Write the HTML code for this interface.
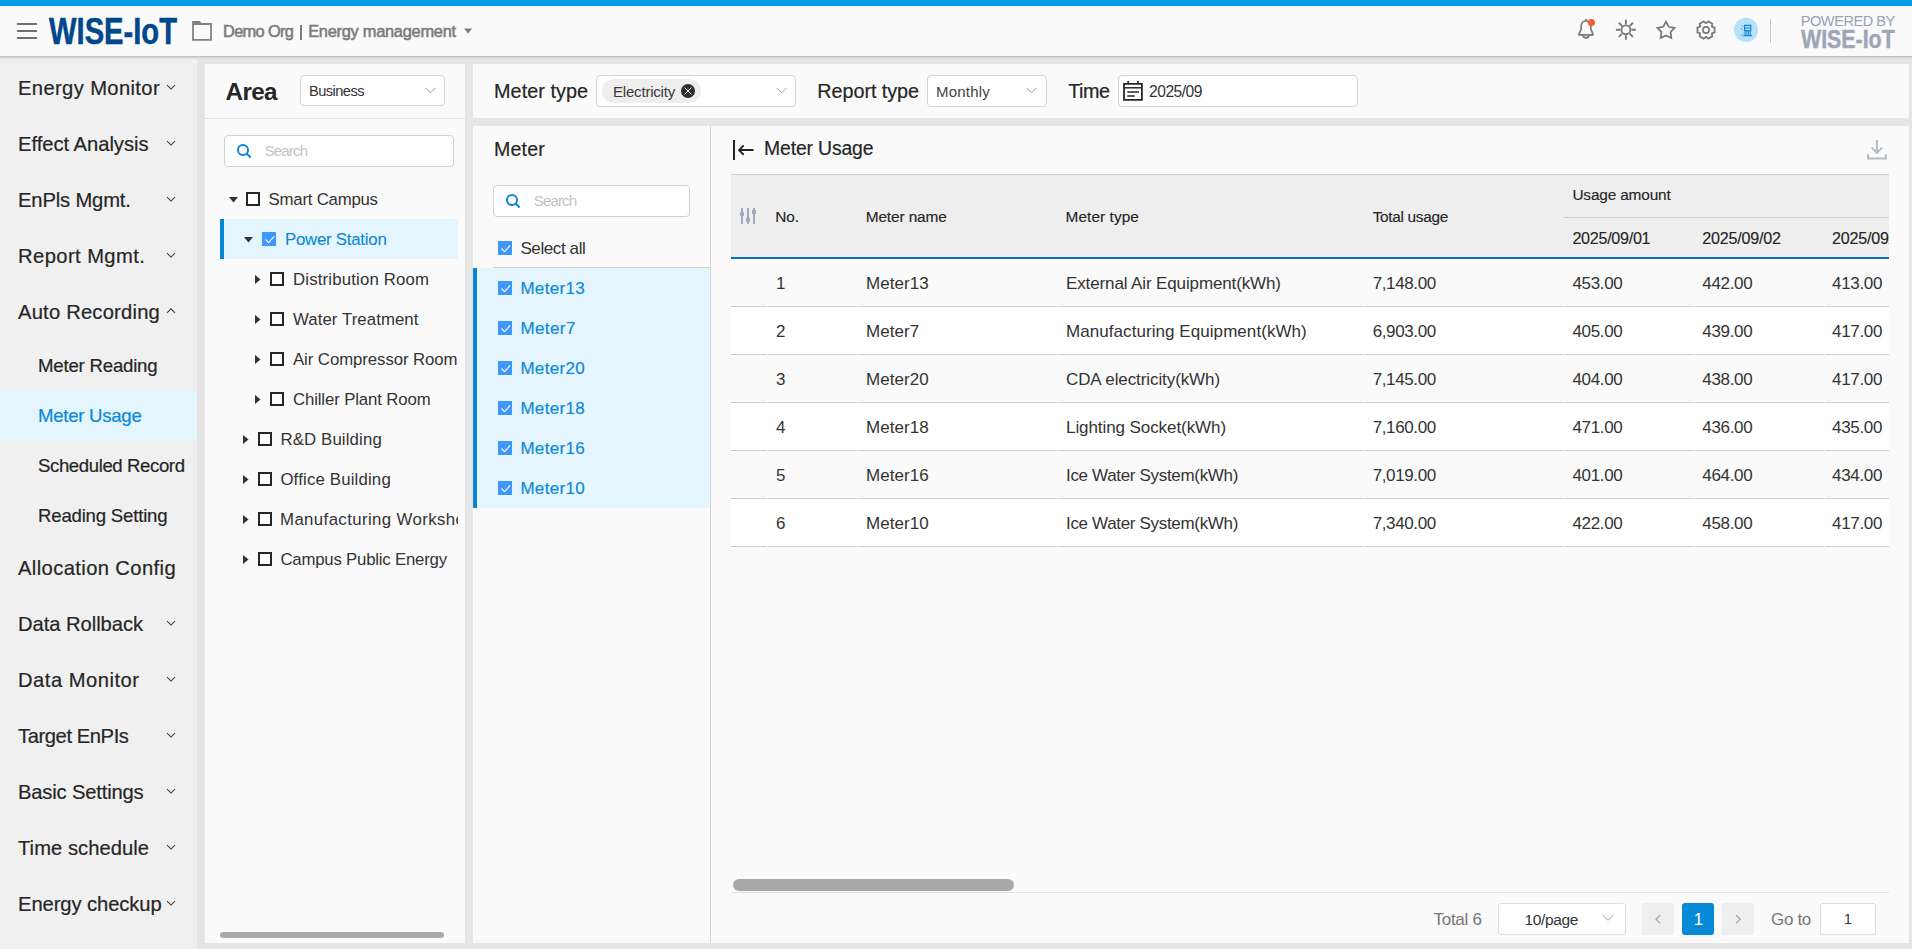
<!DOCTYPE html>
<html><head><meta charset="utf-8"><style>
html,body{margin:0;padding:0;width:1912px;height:949px;overflow:hidden;background:#e5e5e5}
body{position:relative;font-family:"Liberation Sans",sans-serif}
body div, body svg{position:absolute;white-space:nowrap}
body div div{position:absolute}
</style></head><body>
<div style="left:0px;top:0px;width:1912px;height:949px;background:#e5e5e5"></div>
<div style="left:0px;top:6px;width:1912px;height:50px;background:#fafafa"></div>
<div style="left:0px;top:56px;width:1912px;height:3px;background:linear-gradient(#b8b8b8,#d8d8d8 50%,#e5e5e5)"></div>
<div style="left:0px;top:0px;width:1912px;height:6px;background:#019fe9"></div>
<div style="left:49px;top:14.39px;font-size:36.4px;line-height:36.4px;color:#00478c;font-weight:700;transform:scaleX(0.8015);transform-origin:0 0;-webkit-text-stroke:0.5px #00478c;">WISE-IoT</div>
<div style="left:223px;top:23.12px;font-size:16.4px;line-height:16.4px;color:#7b7b7b;letter-spacing:-0.664px;-webkit-text-stroke:0.55px #7b7b7b;">Demo Org</div>
<div style="left:300.4px;top:24.6px;width:2px;height:15.2px;background:#7b7b7b"></div>
<div style="left:308.2px;top:23.12px;font-size:16.4px;line-height:16.4px;color:#7b7b7b;letter-spacing:-0.269px;-webkit-text-stroke:0.55px #7b7b7b;">Energy management</div>
<div style="left:1800.7px;top:13.94px;font-size:14.6px;line-height:14.6px;color:#98a2b4;letter-spacing:-0.474px;">POWERED BY</div>
<div style="left:1801px;top:27.13px;font-size:25.6px;line-height:25.6px;color:#9ca6b8;font-weight:700;transform:scaleX(0.8343);transform-origin:0 0;-webkit-text-stroke:0.45px #9ca6b8;">WISE-IoT</div>
<div style="left:0px;top:59px;width:197px;height:890px;background:#f0f0f0"></div>
<div style="left:18px;top:78.20px;font-size:20.2px;line-height:20.2px;color:#262626;letter-spacing:0.365px;-webkit-text-stroke:0.2px #262626;">Energy Monitor</div>
<div style="left:18px;top:134.20px;font-size:20.2px;line-height:20.2px;color:#262626;letter-spacing:-0.028px;-webkit-text-stroke:0.2px #262626;">Effect Analysis</div>
<div style="left:18px;top:190.20px;font-size:20.2px;line-height:20.2px;color:#262626;letter-spacing:-0.149px;-webkit-text-stroke:0.2px #262626;">EnPls Mgmt.</div>
<div style="left:18px;top:246.20px;font-size:20.2px;line-height:20.2px;color:#262626;letter-spacing:0.418px;-webkit-text-stroke:0.2px #262626;">Report Mgmt.</div>
<div style="left:18px;top:302.20px;font-size:20.2px;line-height:20.2px;color:#262626;letter-spacing:0.203px;-webkit-text-stroke:0.2px #262626;">Auto Recording</div>
<div style="left:18px;top:558.20px;font-size:20.2px;line-height:20.2px;color:#262626;letter-spacing:0.382px;-webkit-text-stroke:0.2px #262626;">Allocation Config</div>
<div style="left:18px;top:614.20px;font-size:20.2px;line-height:20.2px;color:#262626;letter-spacing:-0.052px;-webkit-text-stroke:0.2px #262626;">Data Rollback</div>
<div style="left:18px;top:670.20px;font-size:20.2px;line-height:20.2px;color:#262626;letter-spacing:0.493px;-webkit-text-stroke:0.2px #262626;">Data Monitor</div>
<div style="left:18px;top:726.20px;font-size:20.2px;line-height:20.2px;color:#262626;letter-spacing:-0.423px;-webkit-text-stroke:0.2px #262626;">Target EnPIs</div>
<div style="left:18px;top:782.20px;font-size:20.2px;line-height:20.2px;color:#262626;letter-spacing:-0.173px;-webkit-text-stroke:0.2px #262626;">Basic Settings</div>
<div style="left:18px;top:838.20px;font-size:20.2px;line-height:20.2px;color:#262626;letter-spacing:0.036px;-webkit-text-stroke:0.2px #262626;">Time schedule</div>
<div style="left:18px;top:894.20px;font-size:20.2px;line-height:20.2px;color:#262626;letter-spacing:-0.083px;-webkit-text-stroke:0.2px #262626;">Energy checkup</div>
<div style="left:0px;top:390px;width:196px;height:50px;background:#e4f5fd"></div>
<div style="left:38px;top:356.86px;font-size:18.6px;line-height:18.6px;color:#262626;letter-spacing:-0.198px;-webkit-text-stroke:0.2px #262626;">Meter Reading</div>
<div style="left:38px;top:406.86px;font-size:18.6px;line-height:18.6px;color:#0a8ad8;letter-spacing:-0.268px;-webkit-text-stroke:0.2px #0a8ad8;">Meter Usage</div>
<div style="left:38px;top:456.86px;font-size:18.6px;line-height:18.6px;color:#262626;letter-spacing:-0.399px;-webkit-text-stroke:0.2px #262626;">Scheduled Record</div>
<div style="left:38px;top:506.86px;font-size:18.6px;line-height:18.6px;color:#262626;letter-spacing:-0.195px;-webkit-text-stroke:0.2px #262626;">Reading Setting</div>
<div style="left:205px;top:64px;width:260px;height:879px;background:#fafafa"></div>
<div style="left:225.5px;top:80.41px;font-size:24.2px;line-height:24.2px;color:#262626;font-weight:700;letter-spacing:-0.574px;">Area</div>
<div style="left:300px;top:75px;width:145px;height:31px;background:#fff;border:1px solid #d4d4d4;border-radius:4px;box-sizing:border-box"></div>
<div style="left:309px;top:83.64px;font-size:14.6px;line-height:14.6px;color:#333;letter-spacing:-0.527px;">Business</div>
<svg style="left:425px;top:87px" width="11" height="7" viewBox="0 0 11 7"><path d="M0.5 0.8l5 5 5-5" fill="none" stroke="#999" stroke-width="1"/></svg>
<div style="left:205px;top:118px;width:260px;height:1px;background:#dde1ea"></div>
<div style="left:224px;top:135px;width:230px;height:32px;background:#fff;border:1px solid #d0d0d0;border-radius:4px;box-sizing:border-box"></div>
<div style="left:264.6px;top:142.93px;font-size:15.2px;line-height:15.2px;color:#c4c4c4;letter-spacing:-0.921px;">Search</div>
<div style="left:220px;top:219px;width:238px;height:40px;background:#e4f5fd"></div>
<div style="left:220px;top:219px;width:4px;height:40px;background:#0a84d6"></div>
<svg style="left:228.6px;top:197px" width="9" height="6" viewBox="0 0 9 6"><path d="M0 0h9L4.5 5.5z" fill="#333"/></svg>
<div style="left:246px;top:192px;width:14px;height:14px;border:2px solid #262626;box-sizing:border-box;background:#fff"></div>
<div style="left:268.6px;top:191.58px;font-size:16.8px;line-height:16.8px;color:#333;letter-spacing:-0.226px;">Smart Campus</div>
<svg style="left:244px;top:237px" width="9" height="6" viewBox="0 0 9 6"><path d="M0 0h9L4.5 5.5z" fill="#333"/></svg>
<svg style="left:262px;top:232px" width="14" height="14" viewBox="0 0 14 14"><rect width="14" height="14" fill="#4097fb"/><path d="M3.6 7.5L6.6 10.6 12.2 4.4" fill="none" stroke="#fff" stroke-width="1.1"/></svg>
<div style="left:285px;top:231.78px;font-size:16.8px;line-height:16.8px;color:#0a88d7;letter-spacing:-0.230px;-webkit-text-stroke:0.1px #0a88d7;">Power Station</div>
<svg style="left:255px;top:274.5px" width="6" height="9" viewBox="0 0 6 9"><path d="M0 0v9l5.5-4.5z" fill="#333"/></svg>
<div style="left:270px;top:272px;width:14px;height:14px;border:2px solid #262626;box-sizing:border-box;background:#fff"></div>
<div style="left:293px;top:271.78px;font-size:16.8px;line-height:16.8px;color:#333;letter-spacing:0.166px;">Distribution Room</div>
<svg style="left:255px;top:314.5px" width="6" height="9" viewBox="0 0 6 9"><path d="M0 0v9l5.5-4.5z" fill="#333"/></svg>
<div style="left:270px;top:312px;width:14px;height:14px;border:2px solid #262626;box-sizing:border-box;background:#fff"></div>
<div style="left:293px;top:311.78px;font-size:16.8px;line-height:16.8px;color:#333;letter-spacing:0.077px;">Water Treatment</div>
<svg style="left:255px;top:354.5px" width="6" height="9" viewBox="0 0 6 9"><path d="M0 0v9l5.5-4.5z" fill="#333"/></svg>
<div style="left:270px;top:352px;width:14px;height:14px;border:2px solid #262626;box-sizing:border-box;background:#fff"></div>
<div style="left:293px;top:351.78px;font-size:16.8px;line-height:16.8px;color:#333;letter-spacing:-0.079px;">Air Compressor Room</div>
<svg style="left:255px;top:394.5px" width="6" height="9" viewBox="0 0 6 9"><path d="M0 0v9l5.5-4.5z" fill="#333"/></svg>
<div style="left:270px;top:392px;width:14px;height:14px;border:2px solid #262626;box-sizing:border-box;background:#fff"></div>
<div style="left:293px;top:391.78px;font-size:16.8px;line-height:16.8px;color:#333;letter-spacing:-0.134px;">Chiller Plant Room</div>
<svg style="left:243px;top:434.5px" width="6" height="9" viewBox="0 0 6 9"><path d="M0 0v9l5.5-4.5z" fill="#333"/></svg>
<div style="left:258px;top:432px;width:14px;height:14px;border:2px solid #262626;box-sizing:border-box;background:#fff"></div>
<div style="left:280.4px;top:431.78px;font-size:16.8px;line-height:16.8px;color:#333;letter-spacing:0.141px;">R&amp;D Building</div>
<svg style="left:243px;top:474.5px" width="6" height="9" viewBox="0 0 6 9"><path d="M0 0v9l5.5-4.5z" fill="#333"/></svg>
<div style="left:258px;top:472px;width:14px;height:14px;border:2px solid #262626;box-sizing:border-box;background:#fff"></div>
<div style="left:280.4px;top:471.78px;font-size:16.8px;line-height:16.8px;color:#333;letter-spacing:0.173px;">Office Building</div>
<svg style="left:243px;top:514.5px" width="6" height="9" viewBox="0 0 6 9"><path d="M0 0v9l5.5-4.5z" fill="#333"/></svg>
<div style="left:258px;top:512px;width:14px;height:14px;border:2px solid #262626;box-sizing:border-box;background:#fff"></div>
<div style="left:280px;top:499px;width:178px;height:40px;overflow:hidden">
<div style="left:0px;top:12.78px;font-size:16.8px;line-height:16.8px;color:#333;letter-spacing:0.398px;">Manufacturing Workshop</div>
</div>
<svg style="left:243px;top:554.5px" width="6" height="9" viewBox="0 0 6 9"><path d="M0 0v9l5.5-4.5z" fill="#333"/></svg>
<div style="left:258px;top:552px;width:14px;height:14px;border:2px solid #262626;box-sizing:border-box;background:#fff"></div>
<div style="left:280.4px;top:551.78px;font-size:16.8px;line-height:16.8px;color:#333;letter-spacing:-0.210px;">Campus Public Energy</div>
<div style="left:220px;top:932px;width:224px;height:6px;background:#aaaaaa;border-radius:3px"></div>
<div style="left:473px;top:64px;width:1436px;height:54px;background:#fafafa"></div>
<div style="left:494px;top:82.04px;font-size:19.8px;line-height:19.8px;color:#262626;letter-spacing:0.075px;-webkit-text-stroke:0.2px #262626;">Meter type</div>
<div style="left:596px;top:75px;width:200px;height:32px;background:#fff;border:1px solid #d4d4d4;border-radius:4px;box-sizing:border-box"></div>
<div style="left:602px;top:79px;width:99px;height:24px;background:#eeeeee;border-radius:12px"></div>
<div style="left:613px;top:83.52px;font-size:15.1px;line-height:15.1px;color:#3a3a3a;letter-spacing:-0.234px;">Electricity</div>
<svg style="left:681px;top:84px" width="14" height="14" viewBox="0 0 14 14"><circle cx="7" cy="7" r="7" fill="#2e2e2e"/><path d="M3.6 3.6l6.8 6.8M10.4 3.6l-6.8 6.8" stroke="#fff" stroke-width="1"/></svg>
<svg style="left:776px;top:87px" width="11" height="7" viewBox="0 0 11 7"><path d="M0.5 0.8l5 5 5-5" fill="none" stroke="#999" stroke-width="1"/></svg>
<div style="left:817.3px;top:82.04px;font-size:19.8px;line-height:19.8px;color:#262626;letter-spacing:-0.051px;-webkit-text-stroke:0.2px #262626;">Report type</div>
<div style="left:927px;top:75px;width:120px;height:32px;background:#fff;border:1px solid #d4d4d4;border-radius:4px;box-sizing:border-box"></div>
<div style="left:936px;top:84.30px;font-size:15px;line-height:15px;color:#444;letter-spacing:0.210px;">Monthly</div>
<svg style="left:1026px;top:87px" width="11" height="7" viewBox="0 0 11 7"><path d="M0.5 0.8l5 5 5-5" fill="none" stroke="#999" stroke-width="1"/></svg>
<div style="left:1068.3px;top:82.04px;font-size:19.8px;line-height:19.8px;color:#262626;letter-spacing:-0.534px;-webkit-text-stroke:0.2px #262626;">Time</div>
<div style="left:1118px;top:75px;width:240px;height:32px;background:#fff;border:1px solid #d4d4d4;border-radius:4px;box-sizing:border-box"></div>
<div style="left:1149px;top:83.79px;font-size:15.6px;line-height:15.6px;color:#333;letter-spacing:-0.482px;">2025/09</div>
<div style="left:473px;top:126px;width:1436px;height:817px;background:#fafafa"></div>
<div style="left:710px;top:126px;width:1px;height:817px;background:#d4d4d4"></div>
<div style="left:494px;top:140.41px;font-size:19.6px;line-height:19.6px;color:#262626;letter-spacing:0.181px;-webkit-text-stroke:0.2px #262626;">Meter</div>
<div style="left:493px;top:185px;width:197px;height:32px;background:#fff;border:1px solid #d0d0d0;border-radius:4px;box-sizing:border-box"></div>
<div style="left:533.7px;top:192.93px;font-size:15.2px;line-height:15.2px;color:#c4c4c4;letter-spacing:-0.921px;">Search</div>
<svg style="left:498px;top:241px" width="14" height="14" viewBox="0 0 14 14"><rect width="14" height="14" fill="#4097fb"/><path d="M3.6 7.5L6.6 10.6 12.2 4.4" fill="none" stroke="#fff" stroke-width="1.1"/></svg>
<div style="left:520.4px;top:239.81px;font-size:17px;line-height:17px;color:#333;letter-spacing:-0.398px;">Select all</div>
<div style="left:493px;top:267px;width:217px;height:1px;background:#cfcfcf"></div>
<div style="left:473px;top:268px;width:237px;height:240px;background:#e4f5fd"></div>
<div style="left:473px;top:268px;width:4px;height:240px;background:#0a84d6"></div>
<svg style="left:498px;top:281px" width="14" height="14" viewBox="0 0 14 14"><rect width="14" height="14" fill="#4097fb"/><path d="M3.6 7.5L6.6 10.6 12.2 4.4" fill="none" stroke="#fff" stroke-width="1.1"/></svg>
<div style="left:520.4px;top:279.91px;font-size:17px;line-height:17px;color:#0a88d7;letter-spacing:0.318px;-webkit-text-stroke:0.15px #0a88d7;">Meter13</div>
<svg style="left:498px;top:321px" width="14" height="14" viewBox="0 0 14 14"><rect width="14" height="14" fill="#4097fb"/><path d="M3.6 7.5L6.6 10.6 12.2 4.4" fill="none" stroke="#fff" stroke-width="1.1"/></svg>
<div style="left:520.4px;top:319.91px;font-size:17px;line-height:17px;color:#0a88d7;letter-spacing:0.413px;-webkit-text-stroke:0.15px #0a88d7;">Meter7</div>
<svg style="left:498px;top:361px" width="14" height="14" viewBox="0 0 14 14"><rect width="14" height="14" fill="#4097fb"/><path d="M3.6 7.5L6.6 10.6 12.2 4.4" fill="none" stroke="#fff" stroke-width="1.1"/></svg>
<div style="left:520.4px;top:359.91px;font-size:17px;line-height:17px;color:#0a88d7;letter-spacing:0.318px;-webkit-text-stroke:0.15px #0a88d7;">Meter20</div>
<svg style="left:498px;top:401px" width="14" height="14" viewBox="0 0 14 14"><rect width="14" height="14" fill="#4097fb"/><path d="M3.6 7.5L6.6 10.6 12.2 4.4" fill="none" stroke="#fff" stroke-width="1.1"/></svg>
<div style="left:520.4px;top:399.91px;font-size:17px;line-height:17px;color:#0a88d7;letter-spacing:0.318px;-webkit-text-stroke:0.15px #0a88d7;">Meter18</div>
<svg style="left:498px;top:441px" width="14" height="14" viewBox="0 0 14 14"><rect width="14" height="14" fill="#4097fb"/><path d="M3.6 7.5L6.6 10.6 12.2 4.4" fill="none" stroke="#fff" stroke-width="1.1"/></svg>
<div style="left:520.4px;top:439.91px;font-size:17px;line-height:17px;color:#0a88d7;letter-spacing:0.318px;-webkit-text-stroke:0.15px #0a88d7;">Meter16</div>
<svg style="left:498px;top:481px" width="14" height="14" viewBox="0 0 14 14"><rect width="14" height="14" fill="#4097fb"/><path d="M3.6 7.5L6.6 10.6 12.2 4.4" fill="none" stroke="#fff" stroke-width="1.1"/></svg>
<div style="left:520.4px;top:479.91px;font-size:17px;line-height:17px;color:#0a88d7;letter-spacing:0.318px;-webkit-text-stroke:0.15px #0a88d7;">Meter10</div>
<div style="left:733px;top:140px;width:2px;height:20px;background:#262626"></div>
<div style="left:764px;top:138.98px;font-size:19.4px;line-height:19.4px;color:#262626;letter-spacing:-0.147px;-webkit-text-stroke:0.2px #262626;">Meter Usage</div>
<div style="left:731px;top:174px;width:1158px;height:1px;background:#cfcfcf"></div>
<div style="left:731px;top:175px;width:1158px;height:82px;background:#eeeeee"></div>
<div style="left:1564px;top:217px;width:325px;height:1px;background:#d0d0d0"></div>
<div style="left:731px;top:257px;width:1158px;height:2px;background:#0a70b8"></div>
<div style="left:775.3px;top:208.66px;font-size:15.4px;line-height:15.4px;color:#262626;letter-spacing:-0.084px;-webkit-text-stroke:0.15px #262626;">No.</div>
<div style="left:865.7px;top:208.66px;font-size:15.4px;line-height:15.4px;color:#262626;letter-spacing:-0.113px;-webkit-text-stroke:0.15px #262626;">Meter name</div>
<div style="left:1065.5px;top:208.66px;font-size:15.4px;line-height:15.4px;color:#262626;letter-spacing:0.078px;-webkit-text-stroke:0.15px #262626;">Meter type</div>
<div style="left:1372.7px;top:209.36px;font-size:15.4px;line-height:15.4px;color:#262626;letter-spacing:-0.311px;-webkit-text-stroke:0.15px #262626;">Total usage</div>
<div style="left:1572.4px;top:187.36px;font-size:15.4px;line-height:15.4px;color:#262626;letter-spacing:-0.159px;-webkit-text-stroke:0.15px #262626;">Usage amount</div>
<div style="left:1572.4px;top:229.67px;font-size:16.1px;line-height:16.1px;color:#262626;letter-spacing:-0.266px;-webkit-text-stroke:0.15px #262626;">2025/09/01</div>
<div style="left:1702.3px;top:229.67px;font-size:16.1px;line-height:16.1px;color:#262626;letter-spacing:-0.206px;-webkit-text-stroke:0.15px #262626;">2025/09/02</div>
<div style="left:1832px;top:225px;width:57px;height:25px;overflow:hidden">
<div style="left:0px;top:4.67px;font-size:16.1px;line-height:16.1px;color:#262626;letter-spacing:-0.206px;-webkit-text-stroke:0.15px #262626;">2025/09/03</div>
</div>
<div style="left:731px;top:306px;width:1158px;height:1px;background:#cccccc"></div>
<div style="left:767px;top:306px;width:1px;height:1px;background:#fafafa"></div>
<div style="left:857px;top:306px;width:1px;height:1px;background:#fafafa"></div>
<div style="left:1057px;top:306px;width:1px;height:1px;background:#fafafa"></div>
<div style="left:1364px;top:306px;width:1px;height:1px;background:#fafafa"></div>
<div style="left:1564px;top:306px;width:1px;height:1px;background:#fafafa"></div>
<div style="left:1694px;top:306px;width:1px;height:1px;background:#fafafa"></div>
<div style="left:1824px;top:306px;width:1px;height:1px;background:#fafafa"></div>
<div style="left:776px;top:275.01px;font-size:17px;line-height:17px;color:#333;">1</div>
<div style="left:866px;top:275.01px;font-size:17px;line-height:17px;color:#333;letter-spacing:0.045px;">Meter13</div>
<div style="left:1066px;top:275.01px;font-size:17px;line-height:17px;color:#333;letter-spacing:-0.124px;">External Air Equipment(kWh)</div>
<div style="left:1372.7px;top:275.01px;font-size:17px;line-height:17px;color:#333;letter-spacing:-0.372px;">7,148.00</div>
<div style="left:1572.4px;top:275.01px;font-size:17px;line-height:17px;color:#333;letter-spacing:-0.329px;">453.00</div>
<div style="left:1702.3px;top:275.01px;font-size:17px;line-height:17px;color:#333;letter-spacing:-0.329px;">442.00</div>
<div style="left:1832px;top:275.01px;font-size:17px;line-height:17px;color:#333;letter-spacing:-0.329px;">413.00</div>
<div style="left:731px;top:307px;width:1158px;height:47px;background:#ffffff"></div>
<div style="left:731px;top:354px;width:1158px;height:1px;background:#cccccc"></div>
<div style="left:767px;top:354px;width:1px;height:1px;background:#ffffff"></div>
<div style="left:857px;top:354px;width:1px;height:1px;background:#ffffff"></div>
<div style="left:1057px;top:354px;width:1px;height:1px;background:#ffffff"></div>
<div style="left:1364px;top:354px;width:1px;height:1px;background:#ffffff"></div>
<div style="left:1564px;top:354px;width:1px;height:1px;background:#ffffff"></div>
<div style="left:1694px;top:354px;width:1px;height:1px;background:#ffffff"></div>
<div style="left:1824px;top:354px;width:1px;height:1px;background:#ffffff"></div>
<div style="left:776px;top:323.01px;font-size:17px;line-height:17px;color:#333;">2</div>
<div style="left:866px;top:323.01px;font-size:17px;line-height:17px;color:#333;letter-spacing:0.044px;">Meter7</div>
<div style="left:1066px;top:323.01px;font-size:17px;line-height:17px;color:#333;letter-spacing:0.063px;">Manufacturing Equipment(kWh)</div>
<div style="left:1372.7px;top:323.01px;font-size:17px;line-height:17px;color:#333;letter-spacing:-0.372px;">6,903.00</div>
<div style="left:1572.4px;top:323.01px;font-size:17px;line-height:17px;color:#333;letter-spacing:-0.329px;">405.00</div>
<div style="left:1702.3px;top:323.01px;font-size:17px;line-height:17px;color:#333;letter-spacing:-0.329px;">439.00</div>
<div style="left:1832px;top:323.01px;font-size:17px;line-height:17px;color:#333;letter-spacing:-0.329px;">417.00</div>
<div style="left:731px;top:402px;width:1158px;height:1px;background:#cccccc"></div>
<div style="left:767px;top:402px;width:1px;height:1px;background:#fafafa"></div>
<div style="left:857px;top:402px;width:1px;height:1px;background:#fafafa"></div>
<div style="left:1057px;top:402px;width:1px;height:1px;background:#fafafa"></div>
<div style="left:1364px;top:402px;width:1px;height:1px;background:#fafafa"></div>
<div style="left:1564px;top:402px;width:1px;height:1px;background:#fafafa"></div>
<div style="left:1694px;top:402px;width:1px;height:1px;background:#fafafa"></div>
<div style="left:1824px;top:402px;width:1px;height:1px;background:#fafafa"></div>
<div style="left:776px;top:371.01px;font-size:17px;line-height:17px;color:#333;">3</div>
<div style="left:866px;top:371.01px;font-size:17px;line-height:17px;color:#333;letter-spacing:0.045px;">Meter20</div>
<div style="left:1066px;top:371.01px;font-size:17px;line-height:17px;color:#333;letter-spacing:-0.093px;">CDA electricity(kWh)</div>
<div style="left:1372.7px;top:371.01px;font-size:17px;line-height:17px;color:#333;letter-spacing:-0.372px;">7,145.00</div>
<div style="left:1572.4px;top:371.01px;font-size:17px;line-height:17px;color:#333;letter-spacing:-0.329px;">404.00</div>
<div style="left:1702.3px;top:371.01px;font-size:17px;line-height:17px;color:#333;letter-spacing:-0.329px;">438.00</div>
<div style="left:1832px;top:371.01px;font-size:17px;line-height:17px;color:#333;letter-spacing:-0.329px;">417.00</div>
<div style="left:731px;top:403px;width:1158px;height:47px;background:#ffffff"></div>
<div style="left:731px;top:450px;width:1158px;height:1px;background:#cccccc"></div>
<div style="left:767px;top:450px;width:1px;height:1px;background:#ffffff"></div>
<div style="left:857px;top:450px;width:1px;height:1px;background:#ffffff"></div>
<div style="left:1057px;top:450px;width:1px;height:1px;background:#ffffff"></div>
<div style="left:1364px;top:450px;width:1px;height:1px;background:#ffffff"></div>
<div style="left:1564px;top:450px;width:1px;height:1px;background:#ffffff"></div>
<div style="left:1694px;top:450px;width:1px;height:1px;background:#ffffff"></div>
<div style="left:1824px;top:450px;width:1px;height:1px;background:#ffffff"></div>
<div style="left:776px;top:419.01px;font-size:17px;line-height:17px;color:#333;">4</div>
<div style="left:866px;top:419.01px;font-size:17px;line-height:17px;color:#333;letter-spacing:0.045px;">Meter18</div>
<div style="left:1066px;top:419.01px;font-size:17px;line-height:17px;color:#333;letter-spacing:-0.079px;">Lighting Socket(kWh)</div>
<div style="left:1372.7px;top:419.01px;font-size:17px;line-height:17px;color:#333;letter-spacing:-0.372px;">7,160.00</div>
<div style="left:1572.4px;top:419.01px;font-size:17px;line-height:17px;color:#333;letter-spacing:-0.329px;">471.00</div>
<div style="left:1702.3px;top:419.01px;font-size:17px;line-height:17px;color:#333;letter-spacing:-0.329px;">436.00</div>
<div style="left:1832px;top:419.01px;font-size:17px;line-height:17px;color:#333;letter-spacing:-0.329px;">435.00</div>
<div style="left:731px;top:498px;width:1158px;height:1px;background:#cccccc"></div>
<div style="left:767px;top:498px;width:1px;height:1px;background:#fafafa"></div>
<div style="left:857px;top:498px;width:1px;height:1px;background:#fafafa"></div>
<div style="left:1057px;top:498px;width:1px;height:1px;background:#fafafa"></div>
<div style="left:1364px;top:498px;width:1px;height:1px;background:#fafafa"></div>
<div style="left:1564px;top:498px;width:1px;height:1px;background:#fafafa"></div>
<div style="left:1694px;top:498px;width:1px;height:1px;background:#fafafa"></div>
<div style="left:1824px;top:498px;width:1px;height:1px;background:#fafafa"></div>
<div style="left:776px;top:467.01px;font-size:17px;line-height:17px;color:#333;">5</div>
<div style="left:866px;top:467.01px;font-size:17px;line-height:17px;color:#333;letter-spacing:0.045px;">Meter16</div>
<div style="left:1066px;top:467.01px;font-size:17px;line-height:17px;color:#333;letter-spacing:-0.326px;">Ice Water System(kWh)</div>
<div style="left:1372.7px;top:467.01px;font-size:17px;line-height:17px;color:#333;letter-spacing:-0.372px;">7,019.00</div>
<div style="left:1572.4px;top:467.01px;font-size:17px;line-height:17px;color:#333;letter-spacing:-0.329px;">401.00</div>
<div style="left:1702.3px;top:467.01px;font-size:17px;line-height:17px;color:#333;letter-spacing:-0.329px;">464.00</div>
<div style="left:1832px;top:467.01px;font-size:17px;line-height:17px;color:#333;letter-spacing:-0.329px;">434.00</div>
<div style="left:731px;top:499px;width:1158px;height:47px;background:#ffffff"></div>
<div style="left:731px;top:546px;width:1158px;height:1px;background:#cccccc"></div>
<div style="left:767px;top:546px;width:1px;height:1px;background:#ffffff"></div>
<div style="left:857px;top:546px;width:1px;height:1px;background:#ffffff"></div>
<div style="left:1057px;top:546px;width:1px;height:1px;background:#ffffff"></div>
<div style="left:1364px;top:546px;width:1px;height:1px;background:#ffffff"></div>
<div style="left:1564px;top:546px;width:1px;height:1px;background:#ffffff"></div>
<div style="left:1694px;top:546px;width:1px;height:1px;background:#ffffff"></div>
<div style="left:1824px;top:546px;width:1px;height:1px;background:#ffffff"></div>
<div style="left:776px;top:515.01px;font-size:17px;line-height:17px;color:#333;">6</div>
<div style="left:866px;top:515.01px;font-size:17px;line-height:17px;color:#333;letter-spacing:0.045px;">Meter10</div>
<div style="left:1066px;top:515.01px;font-size:17px;line-height:17px;color:#333;letter-spacing:-0.326px;">Ice Water System(kWh)</div>
<div style="left:1372.7px;top:515.01px;font-size:17px;line-height:17px;color:#333;letter-spacing:-0.372px;">7,340.00</div>
<div style="left:1572.4px;top:515.01px;font-size:17px;line-height:17px;color:#333;letter-spacing:-0.329px;">422.00</div>
<div style="left:1702.3px;top:515.01px;font-size:17px;line-height:17px;color:#333;letter-spacing:-0.329px;">458.00</div>
<div style="left:1832px;top:515.01px;font-size:17px;line-height:17px;color:#333;letter-spacing:-0.329px;">417.00</div>
<div style="left:733px;top:879px;width:281px;height:12px;background:#a9a9a9;border-radius:6px"></div>
<div style="left:731px;top:892px;width:1158px;height:1px;background:#dde1ea"></div>
<div style="left:1433.5px;top:911.11px;font-size:17px;line-height:17px;color:#777;letter-spacing:-0.271px;">Total 6</div>
<div style="left:1498px;top:903px;width:128px;height:32px;background:#fff;border:1px solid #d9dce4;border-radius:3px;box-sizing:border-box"></div>
<div style="left:1524.5px;top:911.88px;font-size:15.5px;line-height:15.5px;color:#333;letter-spacing:-0.362px;">10/page</div>
<svg style="left:1602px;top:914px" width="12" height="7" viewBox="0 0 12 7"><path d="M0.5 0.8l5.5 5.5 5.5-5.5" fill="none" stroke="#999" stroke-width="1"/></svg>
<div style="left:1642px;top:903px;width:32px;height:32px;background:#eeeeee;border-radius:2px"></div>
<div style="left:1682px;top:903px;width:32px;height:32px;background:#0689d6;border-radius:3px"></div>
<div style="left:1693.8px;top:911.11px;font-size:17px;line-height:17px;color:#fff;">1</div>
<div style="left:1722px;top:903px;width:32px;height:32px;background:#eeeeee;border-radius:2px"></div>
<div style="left:1771px;top:911.11px;font-size:17px;line-height:17px;color:#777;letter-spacing:-0.319px;">Go to</div>
<div style="left:1820px;top:903px;width:56px;height:32px;background:#fff;border:1px solid #d9dce4;border-radius:3px;box-sizing:border-box"></div>
<div style="left:1844px;top:912.15px;font-size:14px;line-height:14px;color:#333;">1</div>
<svg style="left:0;top:0" width="1912" height="949"><path d="M17.8 24H36.2" stroke="#6e6e6e" stroke-width="2.1" stroke-linecap="round"/>
<path d="M17.8 31H36.2" stroke="#6e6e6e" stroke-width="2.1" stroke-linecap="round"/>
<path d="M17.8 38H36.2" stroke="#6e6e6e" stroke-width="2.1" stroke-linecap="round"/>
<path d="M192.1 21.1H199.7L201.5 23.1H211.9V40.8H192.1zM193.9 25V38.9H210.1V25z" fill="#808080" fill-rule="evenodd"/>
<path d="M464 28.6h8.2l-4.1 4.8z" fill="#7b7b7b"/>
<g fill="none" stroke="#7a7a7a" stroke-width="1.75" stroke-linejoin="round">
<path d="M1581.2 28.7V25.7a4.8 4.8 0 0 1 9.6 0V28.7L1593.1 34.75H1578.9L1581.2 28.7z"/>
<path d="M1583 34.75a3 3 0 0 0 6 0"/>
<path d="M1586 19v2"/></g>
<circle cx="1591.4" cy="22.5" r="3.6" fill="#f45b3a"/>
<circle cx="1625.9" cy="29.8" r="4.45" fill="none" stroke="#7a7a7a" stroke-width="1.8"/><path d="M1631.30 29.80L1635.90 29.80M1629.72 33.62L1632.97 36.87M1625.90 35.20L1625.90 39.80M1622.08 33.62L1618.83 36.87M1620.50 29.80L1615.90 29.80M1622.08 25.98L1618.83 22.73M1625.90 24.40L1625.90 19.80M1629.72 25.98L1632.97 22.73" stroke="#7a7a7a" stroke-width="1.9"/>
<polygon points="1666.00,21.70 1668.82,26.82 1674.56,27.92 1670.57,32.18 1671.29,37.98 1666.00,35.50 1660.71,37.98 1661.43,32.18 1657.44,27.92 1663.18,26.82" fill="none" stroke="#7a7a7a" stroke-width="1.8" stroke-linejoin="miter" stroke-miterlimit="3"/>
<polygon points="1712.06,26.69 1714.60,27.71 1714.60,32.29 1712.06,33.31 1711.89,33.59 1712.28,36.30 1708.32,38.59 1706.16,36.90 1705.84,36.90 1703.68,38.59 1699.72,36.30 1700.11,33.59 1699.94,33.31 1697.40,32.29 1697.40,27.71 1699.94,26.69 1700.11,26.41 1699.72,23.70 1703.68,21.41 1705.84,23.10 1706.16,23.10 1708.32,21.41 1712.28,23.70 1711.89,26.41" fill="none" stroke="#7a7a7a" stroke-width="1.8" stroke-linejoin="miter"/><circle cx="1706" cy="30" r="3.1" fill="none" stroke="#7a7a7a" stroke-width="1.7"/>
<circle cx="1746" cy="29.9" r="12.1" fill="#b5e2f6"/>
<g fill="none" stroke="#0d84d9">
<path d="M1744.6 25.4H1750.8V30.6H1744.6z" stroke-width="1.15"/>
<path d="M1744.6 28H1750.8" stroke-width="1.1"/>
<path d="M1745.1 30.6V35M1746.9 30.9V35M1748.6 30.9V35M1750.3 30.6V35" stroke-width="0.95"/>
<path d="M1743.4 35.6H1752.1" stroke-width="1.3"/>
<path d="M1741.6 25.1L1744.2 27.7M1741.2 28.4L1743.8 30.8M1741.2 35.8L1744 32.8" stroke-width="0.85" stroke-dasharray="1.1 0.7"/>
</g>
<path d="M1770.5 19v23.8" stroke="#c9c9c9" stroke-width="1"/>
<path d="M167 85.2L171 89.1L175 85.2" fill="none" stroke="#3a3a3a" stroke-width="1.05"/>
<path d="M167 141.2L171 145.1L175 141.2" fill="none" stroke="#3a3a3a" stroke-width="1.05"/>
<path d="M167 197.2L171 201.1L175 197.2" fill="none" stroke="#3a3a3a" stroke-width="1.05"/>
<path d="M167 253.2L171 257.1L175 253.2" fill="none" stroke="#3a3a3a" stroke-width="1.05"/>
<path d="M167 312.8L171 308.8L175 312.8" fill="none" stroke="#3a3a3a" stroke-width="1.05"/>
<path d="M167 621.2L171 625.1L175 621.2" fill="none" stroke="#3a3a3a" stroke-width="1.05"/>
<path d="M167 677.2L171 681.1L175 677.2" fill="none" stroke="#3a3a3a" stroke-width="1.05"/>
<path d="M167 733.2L171 737.1L175 733.2" fill="none" stroke="#3a3a3a" stroke-width="1.05"/>
<path d="M167 789.2L171 793.1L175 789.2" fill="none" stroke="#3a3a3a" stroke-width="1.05"/>
<path d="M167 845.2L171 849.1L175 845.2" fill="none" stroke="#3a3a3a" stroke-width="1.05"/>
<path d="M167 901.2L171 905.1L175 901.2" fill="none" stroke="#3a3a3a" stroke-width="1.05"/>
<circle cx="243" cy="150" r="5.05" fill="none" stroke="#0b84d3" stroke-width="1.95"/><path d="M246.6 153.6L250.6 157.6" stroke="#0b84d3" stroke-width="2.1"/>
<g fill="none" stroke="#262626"><path d="M1124 83.8H1141.9V99.9H1124z" stroke-width="1.8"/><path d="M1124 87.8H1141.9" stroke-width="1.5"/><path d="M1128.2 81V84M1137.9 81V84" stroke-width="1.7"/><path d="M1127.3 92H1139M1127.3 96H1134.8" stroke-width="1.7"/></g>
<circle cx="512" cy="200" r="5.05" fill="none" stroke="#0b84d3" stroke-width="1.95"/><path d="M515.6 203.6L519.6 207.6" stroke="#0b84d3" stroke-width="2.1"/>
<path d="M752.8 150H739.5M743.2 145.9L739 150.1 743.2 154.2" fill="none" stroke="#222" stroke-width="1.9" stroke-linecap="round" stroke-linejoin="round"/>
<path d="M1876.9 140V153M1871.7 147.6L1876.9 152.8 1882.1 147.6M1868 154.2V158.6H1885.8V154.2" fill="none" stroke="#b3bac6" stroke-width="2"/>
<g fill="#9ea8b8"><rect x="741" y="208" width="2" height="15.8"/><rect x="747" y="208" width="2" height="15.8"/><rect x="753" y="208" width="2" height="15.8"/><rect x="740" y="212.2" width="4" height="3.6"/><rect x="746" y="218.1" width="4" height="3.7"/><rect x="752" y="210.1" width="4" height="3.7"/></g>
<path d="M1660.2 915.2L1656 919.3 1660.2 923.4" fill="none" stroke="#9a9a9a" stroke-width="1.1"/>
<path d="M1736 915.2L1740.2 919.3 1736 923.4" fill="none" stroke="#9a9a9a" stroke-width="1.1"/></svg>
</body></html>
